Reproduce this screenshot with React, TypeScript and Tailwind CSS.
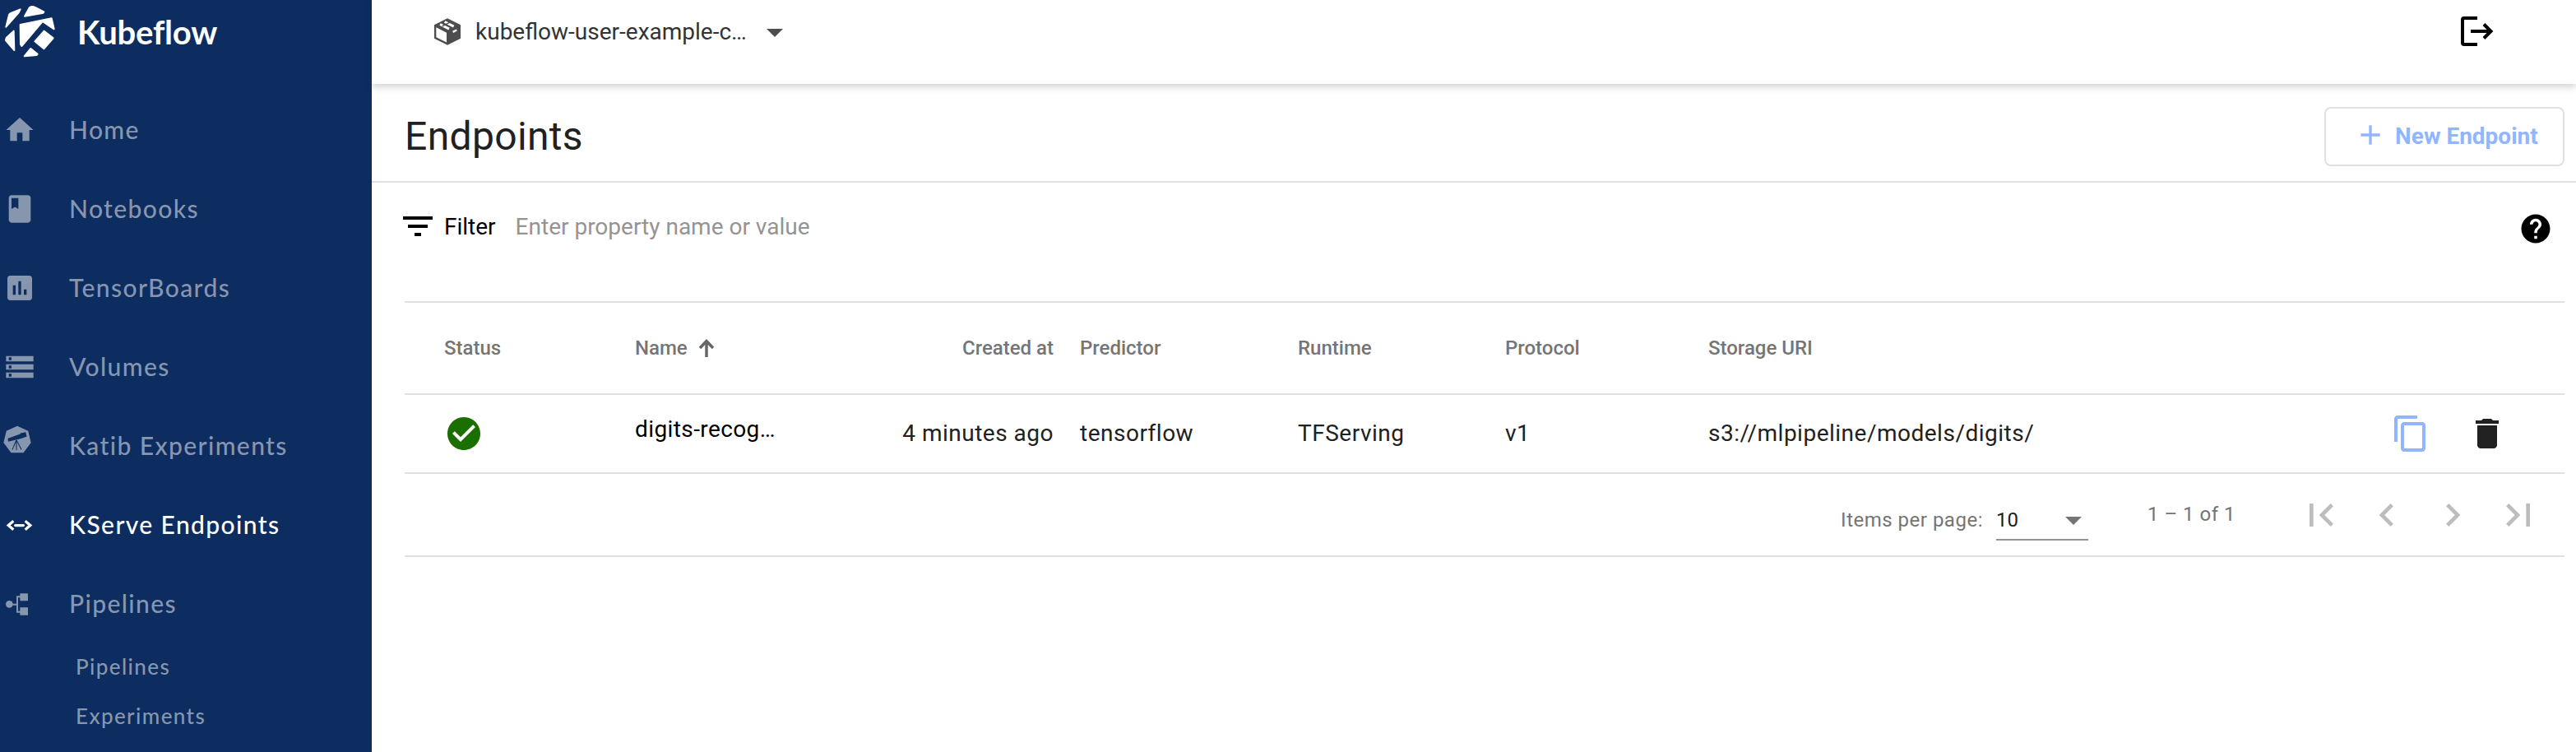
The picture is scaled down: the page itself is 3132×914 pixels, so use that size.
import {
  MdAdd,
  MdArrowDropDown,
  MdAssessment,
  MdBook,
  MdCheckCircle,
  MdChevronLeft,
  MdChevronRight,
  MdContentCopy,
  MdDelete,
  MdFilterList,
  MdFirstPage,
  MdHelp,
  MdHome,
  MdLastPage,
  MdStorage,
} from "react-icons/md"

function KubeflowLogo() {
  return (
    <svg viewBox="0 0 204 210" className="h-[70px] w-[68px] shrink-0" fill="#fff" stroke="#fff" strokeWidth="6" strokeLinejoin="round">
      <path d="M33 54 Q35 50 40 48 L74 34 L68 46 L22 98 Z" />
      <path d="M108 27 Q118 21 128 27 L160 43 L158 47 L90 59 Z" />
      <path d="M74 90 L188 67 L197 106 L155 78 L79 168 L75 162 Z" />
      <path d="M50 113 L52 183 L21 147 L23 138 Z" />
      <path d="M161 113 L194 139 L160 178 L127 151 Z" />
      <path d="M112 177 L137 197 L134 201 L89 205 Z" />
    </svg>
  )
}

function KatibIcon() {
  return (
    <svg viewBox="0 0 100 100" className="h-[34px] w-[34px]">
      <path d="M50 2 L89 20 L99 62 L72 98 L28 98 L1 62 L11 20 Z" fill="currentColor" />
      <path d="M16 47 L60 31 L62 28 L80 24 L84 40 L66 46 L55 49 L18 58 Z" fill="#0d2c5f" />
      <path d="M47 52 L32 87 M47 52 L47 88 M47 52 L65 87" stroke="#0d2c5f" strokeWidth="3" />
    </svg>
  )
}

function EndpointsIcon() {
  return (
    <svg viewBox="0 0 100 40" className="h-[13px] w-[33px]" fill="none" stroke="currentColor" strokeWidth="10">
      <path d="M28 4 L9 20 L28 36 M72 4 L91 20 L72 36" />
      <path d="M35 20 H65" strokeLinecap="round" />
    </svg>
  )
}

function PipelinesIcon() {
  return (
    <svg viewBox="0 0 81 81" className="h-[27px] w-[27px]">
      <path d="M13 41 H42 M54 13 H42 V68 H54" fill="none" stroke="currentColor" strokeWidth="6" />
      <circle cx="13" cy="40" r="13" fill="currentColor" />
      <path d="M52 1 H81 V28 H52 Z M52 52 H81 V80 H52 Z" fill="currentColor" />
    </svg>
  )
}

function PackageIcon() {
  return (
    <svg viewBox="0 0 96 98" className="h-[33px] w-[32px] shrink-0">
      <path d="M48 0 L96 24 V74 L48 98 L0 74 V24 Z" fill="#4d4d4f" />
      <path d="M7 33 L45 53 V88 L7 69 Z" fill="#fff" />
      <path d="M21 22 L54 39 M38 13 L71 30" stroke="#fff" strokeWidth="9" />
      <path d="M29 29 L57 15" stroke="#4d4d4f" strokeWidth="4" />
      <path d="M68 50 L82 43" stroke="#fff" strokeWidth="7" />
    </svg>
  )
}

const navItems = [
  { label: "Home", icon: <MdHome size={40} />, iconClass: "pl-1" },
  { label: "Notebooks", icon: <MdBook size={40} />, iconClass: "pl-1" },
  { label: "TensorBoards", icon: <MdAssessment size={40} />, iconClass: "pl-1" },
  { label: "Volumes", icon: <MdStorage size={40} />, iconClass: "pl-1" },
  { label: "Katib Experiments", icon: <KatibIcon />, iconClass: "pl-1 pb-4" },
  { label: "KServe Endpoints", icon: <EndpointsIcon />, iconClass: "pl-[7px]", active: true },
  { label: "Pipelines", icon: <PipelinesIcon />, iconClass: "pl-[7px]" },
]

function Sidebar() {
  return (
    <aside className="flex h-full w-[452px] shrink-0 flex-col bg-[#0d2c5f] font-['Lato',sans-serif] font-medium text-[#8796af]">
      <div className="flex h-[110px] items-start">
        <KubeflowLogo />
        <span className="pt-[15px] pl-[26px] text-[40px] leading-[48px] font-bold tracking-[-0.2px] text-white">Kubeflow</span>
      </div>
      <nav>
        {navItems.map((item) => (
          <div key={item.label} className={item.active ? "flex h-24 items-center text-white" : "flex h-24 items-center"}>
            <div className={`flex w-[80px] shrink-0 ${item.iconClass}`}>{item.icon}</div>
            <span className="pb-0.5 pl-1 text-[30px] tracking-[1.4px]">{item.label}</span>
          </div>
        ))}
        <div className="pl-[92px] text-[26px] tracking-[1.4px]">
          <div className="flex h-[60px] items-center pb-[3px]">Pipelines</div>
          <div className="flex h-[60px] items-center pb-[3px]">Experiments</div>
        </div>
      </nav>
    </aside>
  )
}

function TopBar() {
  return (
    <header className="z-10 flex h-[102px] shrink-0 items-start bg-white shadow-[0_4px_8px_rgba(60,64,67,0.22)]">
      <div className="flex h-[77px] items-center pl-[76px]">
        <PackageIcon />
        <span className="pt-px pl-[18px] text-[28px] text-[#333]">kubeflow-user-example-c…</span>
        <MdArrowDropDown size={48} className="ml-[10px] text-[#4d4d4f]" />
      </div>
      <div className="ml-auto flex h-[76px] items-center pr-[100px]">
        <svg viewBox="0 0 40 36" className="h-9 w-10" fill="none" stroke="#000" strokeWidth="4">
          <path d="M20 2 H4 Q2 2 2 4 V32 Q2 34 4 34 H20 M12 18 H37 M28 9.500 L36.500 18 L28 26.500" />
        </svg>
      </div>
    </header>
  )
}

function Paginator() {
  return (
    <div className="flex h-[101px] items-center justify-end border-b-2 border-[#e0e0e0] pr-4 text-[24px] text-[#757575]">
      <span className="mt-3 tracking-[0.5px]">Items per page:</span>
      <div className="mt-[14px] ml-4 flex h-12 w-[112px] items-center justify-between border-b-2 border-[#949494] text-[#212121]">
        10
        <MdArrowDropDown size={48} className="-mr-1.5 text-[#757575]" />
      </div>
      <span className="ml-[72px] pb-0.5 tracking-[0.5px]">1 – 1 of 1</span>
      <div className="ml-[64px] flex text-[#bdbdbd]">
        <div className="flex size-20 items-center justify-center"><MdFirstPage size={56} /></div>
        <div className="flex size-20 items-center justify-center"><MdChevronLeft size={56} /></div>
        <div className="flex size-20 items-center justify-center"><MdChevronRight size={56} /></div>
        <div className="flex size-20 items-center justify-center"><MdLastPage size={56} /></div>
      </div>
    </div>
  )
}

function EndpointsTable() {
  const columns = "grid grid-cols-[280px_330px_211px_265px_252px_247px_1fr_211px] items-center"

  return (
    <div className="mr-[14px] ml-10 border-t-2 border-[#e0e0e0]">
      <div className={`${columns} h-[112px] border-b-2 border-[#e0e0e0] text-[24px] font-medium text-[#757575]`}>
        <div className="pl-12">Status</div>
        <div className="flex items-center">
          Name
          <svg viewBox="0 0 20 22" className="ml-[13px] h-[24px] w-5" fill="none" stroke="#666" strokeWidth="3.500">
            <path d="M10 22 V2 M2 11 L10 2.500 L18 11" />
          </svg>
        </div>
        <div className="-ml-5 pr-8 text-right">Created at</div>
        <div>Predictor</div>
        <div>Runtime</div>
        <div>Protocol</div>
        <div>Storage URI</div>
      </div>
      <div className={`${columns} h-[96px] border-b-2 border-[#e0e0e0] text-[28px] tracking-[0.5px] text-[#212121]`}>
        <div className="pl-12">
          <MdCheckCircle size={48} className="text-[#1b6f00]" />
        </div>
        <div className="pb-[10px] tracking-[0.4px] text-black">digits-recog…</div>
        <div className="-ml-5 pr-8 text-right whitespace-nowrap">4 minutes ago</div>
        <div>tensorflow</div>
        <div>TFServing</div>
        <div>v1</div>
        <div>s3://mlpipeline/models/digits/</div>
        <div className="flex items-center">
          <MdContentCopy size={48} className="text-[#91b6ff]" />
          <MdDelete size={48} className="ml-[45px]" />
        </div>
      </div>
      <Paginator />
    </div>
  )
}

export default function App() {
  return (
    <div className="flex h-[914px] w-[3132px] overflow-hidden bg-white font-['Roboto',sans-serif]">
      <Sidebar />
      <main className="flex min-w-0 flex-1 flex-col">
        <TopBar />
        <div className="flex h-[120px] items-center justify-between border-b-2 border-[#e0e0e0] pt-[10px] pr-[14px] pl-10">
          <h1 className="text-[48px] tracking-[0.35px] text-[#212121]">Endpoints</h1>
          <button className="flex h-[72px] w-[292px] items-center rounded-lg border-2 border-[#e0e0e0] pl-[34px] text-[28px] font-bold text-[#91b6ff]">
            <MdAdd size={40} className="mb-1" />
            <span className="pl-[10px]">New Endpoint</span>
          </button>
        </div>
        <div className="flex h-[144px] items-start pt-[29px] pr-[28px] pl-8">
          <MdFilterList size={48} />
          <span className="pt-1 pl-2 text-[28px] text-black">Filter</span>
          <span className="pt-1 pl-6 text-[28px] text-[#949494]">Enter property name or value</span>
          <MdHelp size={42} className="mt-1.5 ml-auto" />
        </div>
        <EndpointsTable />
      </main>
    </div>
  )
}
